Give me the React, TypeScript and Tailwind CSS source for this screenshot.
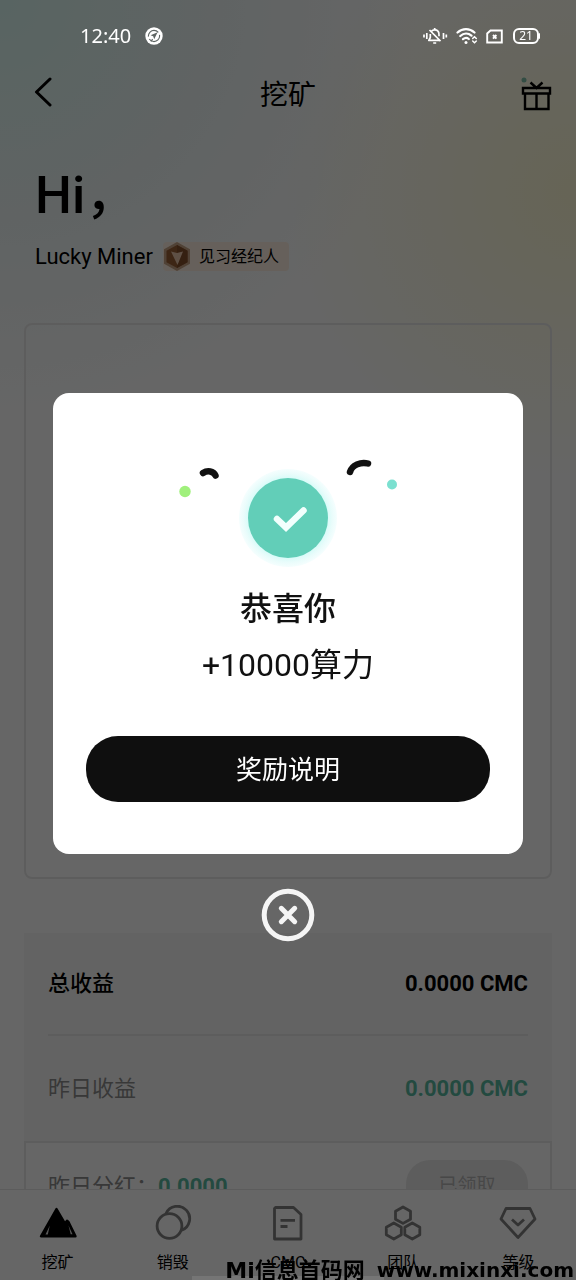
import { useState } from 'react';

const StatusBar = () => (
  <div className="relative z-30 flex h-[72px] items-center justify-between pr-9 pl-20 text-white">
    <div className="flex items-center gap-3.5">
      <span className="font-['Noto_Sans',sans-serif] text-xl">12:40</span>
      <svg width="18" height="18" viewBox="0 0 18 18" aria-hidden="true">
        <circle cx="9" cy="9" r="8.7" fill="#fff" />
        <circle cx="9" cy="9" r="5.6" fill="none" stroke="#5e6563" strokeWidth="1.1" strokeDasharray="14 2.5" />
        <path d="M12.6 5.2 5.6 8.2l2.6 1 1 3z" fill="#5e6563" />
        <path d="M6 14.5l1.6-2.3" stroke="#5e6563" strokeWidth="1.2" />
      </svg>
    </div>
    <div className="flex items-center">
      <svg width="26" height="18" viewBox="0 0 26 18" fill="none" stroke="#fff" strokeWidth="1.7" className="mr-2" aria-hidden="true">
        <path d="M2 7.5v3M4.800 6v6M21.500 6v6M24.300 7.500v3" />
        <path d="M9.500 4.200C10.300 3.200 11.400 2.800 12.700 2.800c2.800 0 4.300 1.900 4.300 4.700v1.700M8.300 7v3.500L6.800 13.400h11.400M7.500 3l11 11.200" strokeLinejoin="round" />
        <path d="M12.700 1v1.800M11.200 16h3" />
      </svg>
      <svg width="22" height="18" viewBox="0 0 22 18" fill="none" stroke="#fff" strokeWidth="2.200" strokeLinecap="round" className="mr-2" aria-hidden="true">
        <path d="M1.500 5.500C6.500 1 13.500 1 18.500 5.500M4.300 9C7.800 5.800 12.200 5.800 15.500 8.700M7 12.200c2-1.600 4-1.600 5.800-.2" />
        <circle cx="10" cy="15.500" r="1.500" fill="#fff" stroke="none" />
        <path d="M16.700 11.500l1.800-1.800 1.800 1.800M16.700 14l1.800 1.800 1.800-1.800" strokeWidth="1.500" />
      </svg>
      <svg width="17" height="15" viewBox="0 0 17 15" fill="none" stroke="#fff" strokeWidth="1.900" className="mr-2.5" aria-hidden="true">
        <path d="M4.500 1.500H15.800V13.500H1.200V4.500z" />
        <path d="M7 6l3.400 3.600M10.400 6L7 9.600" />
      </svg>
      <div className="flex items-center">
        <span className="flex h-4 w-[26px] items-center justify-center rounded-md border-2 border-white font-['Noto_Sans',sans-serif] text-xs leading-3">
          21
        </span>
        <span className="h-1.5 w-px rounded-r bg-white" />
      </div>
    </div>
  </div>
);

const MineIcon = () => (
  <svg width="38" height="36" viewBox="0 0 38 36" aria-hidden="true">
    <path d="M17.500 4 2 31.300h34.500L29.500 17l-1.500-1.200-2 2.700z" fill="#000" stroke="#000" strokeWidth="2.400" strokeLinejoin="round" />
    <path d="M10.800 20.500 6.500 29.500h2.300zM29.500 20.500l4 8.800h-1.800z" fill="#d8d8d8" />
  </svg>
);

const BurnIcon = () => (
  <svg width="38" height="36" viewBox="0 0 38 36" fill="none" stroke="currentColor" strokeWidth="2.800" aria-hidden="true">
    <circle cx="15.500" cy="21" r="12.400" />
    <path d="M12 8.500A12.400 12.400 0 1 1 27.800 25.200" />
  </svg>
);

const DocIcon = () => (
  <svg width="38" height="36" viewBox="0 0 38 36" fill="none" stroke="currentColor" strokeWidth="2.800" strokeLinejoin="round" aria-hidden="true">
    <path d="M6.500 2.500h18l7.500 7V34H5.500V3.500z" />
    <path d="M11.500 15.300H26M11.500 21.500h7" />
  </svg>
);

const TeamIcon = () => (
  <svg width="38" height="36" viewBox="0 0 38 36" fill="none" stroke="currentColor" strokeWidth="2.800" strokeLinejoin="round" aria-hidden="true">
    <path d="M19 2l7.500 4.200v8L19 18.400l-7.500-4.200v-8z" />
    <path d="M9.800 18l7.500 4.200v7.600L9.800 34l-7.500-4.200v-7.600zM28.300 18l7.500 4.200v7.600L28.300 34l-7.500-4.200v-7.600z" />
  </svg>
);

const LevelIcon = () => (
  <svg width="38" height="36" viewBox="0 0 38 36" fill="none" stroke="currentColor" strokeWidth="2.800" strokeLinejoin="round" aria-hidden="true">
    <path d="M7 3.500h24L36 14 19 32.500 2 14z" />
    <path d="M13 14.500l6 5.500 6-5.500" />
  </svg>
);

const tabs = [
  { label: '挖矿', Icon: MineIcon },
  { label: '销毁', Icon: BurnIcon },
  { label: 'CMC', Icon: DocIcon },
  { label: '团队', Icon: TeamIcon },
  { label: '等级', Icon: LevelIcon },
];

const RewardArt = () => (
  <svg width="230" height="116" viewBox="0 0 230 116" fill="none" className="mx-auto" aria-hidden="true">
    <defs>
      <radialGradient id="halo">
        <stop offset="0.8" stopColor="#d6fbf8" />
        <stop offset="0.9" stopColor="#e9fcfb" />
        <stop offset="1" stopColor="#f5fefe" />
      </radialGradient>
    </defs>
    <circle cx="115" cy="65" r="49" fill="url(#halo)" />
    <circle cx="115" cy="65" r="40" fill="#62ceb8" />
    <path d="M104 66l9 8.500L130.500 57.500" stroke="#f2fffd" strokeWidth="6.500" strokeLinecap="round" />
    <path d="M30 20c4.500-3 10.500-2 12.500 2.500" stroke="#111" strokeWidth="6.500" strokeLinecap="round" />
    <path d="M177 19c2-7 11-10.500 18-8.500" stroke="#111" strokeWidth="6.500" strokeLinecap="round" />
    <circle cx="12" cy="38.500" r="5.700" fill="#a0f07c" />
    <circle cx="219" cy="31.500" r="5" fill="#7be0d0" />
  </svg>
);

const RewardDialog = ({ onClose }: { onClose: () => void }) => (
  <div className="fixed inset-0 z-20 flex flex-col items-center justify-center bg-black/60 px-[53px] pt-[54px]">
    <div role="dialog" aria-labelledby="reward-title" className="w-full rounded-2xl bg-white px-[33px] pt-[60px] pb-[52px] text-center text-[#111]">
      <RewardArt />
      <h2 id="reward-title" className="mt-[18px] text-[32px] leading-[44px] font-medium">恭喜你</h2>
      <p className="mt-3 text-[32px] leading-[44px]">+10000算力</p>
      <button type="button" className="mt-[49px] h-[66px] w-full rounded-[32px] bg-[#0f0f0f] pt-1 text-[26px] text-white">
        奖励说明
      </button>
    </div>
    <button type="button" aria-label="关闭" onClick={onClose} className="mt-[34px]">
      <svg width="54" height="54" viewBox="0 0 54 54" fill="none" stroke="#f5f5f5" strokeWidth="5" strokeLinecap="round" aria-hidden="true">
        <circle cx="27" cy="27" r="23.800" />
        <path d="M20.300 20.300l13.400 13.400M33.700 20.300L20.300 33.700" />
      </svg>
    </button>
  </div>
);

const App = () => {
  const [open, setOpen] = useState(true);

  return (
    <div className="flex h-screen flex-col bg-white bg-[radial-gradient(circle_at_100%_15%,#fffbd6_0,#fffbd600_290px),radial-gradient(circle_at_0_0,#dcfaf5_0,#f0f8f8_220px,#ffffff00_420px)] font-[Roboto,'Noto_Sans_CJK_SC',sans-serif] text-black">
      <StatusBar />
      <header className="flex h-11 shrink-0 items-center justify-between px-6">
        <button type="button" aria-label="返回" className="flex w-10 pb-1 pl-2">
          <svg width="22" height="30" viewBox="0 0 22 30" fill="none" stroke="currentColor" strokeWidth="3" strokeLinecap="round" strokeLinejoin="round" aria-hidden="true">
            <path d="M18 2L4.500 15 18 28" />
          </svg>
        </button>
        <h1 className="pt-1 text-[28px]">挖矿</h1>
        <button type="button" aria-label="礼物" className="flex w-10 justify-end">
          <svg width="32" height="36" viewBox="0 0 32 36" fill="none" stroke="currentColor" strokeWidth="2.400" aria-hidden="true">
            <circle cx="4" cy="4" r="2.500" fill="#7fc0aa" stroke="none" />
            <path d="M3 12h27v5.500H3zM5 17.500h23.500V33H5zM16.500 17.500V33M10.500 6.500l6 5.500 6-5.500" />
          </svg>
        </button>
      </header>

      <main className="flex-1 overflow-hidden px-6">
        <section className="px-[11px] pt-11">
          <p className="text-[52px] leading-[72px] font-medium">Hi，</p>
          <div className="mt-2 flex h-8 items-center">
            <span className="text-[22px]">Lucky Miner</span>
            <div className="ml-2.5 flex h-[29px] items-center gap-2 rounded bg-[#fff1e3] pr-2.5">
              <svg width="28" height="29" viewBox="0 0 28 29" aria-hidden="true">
                <path d="M14 0l13 7.200v14.600L14 29 1 21.800V7.200z" fill="#c9a587" />
                <path d="M14 3l10.500 5.800v11.400L14 26 3.500 20.200V8.800z" fill="#9a5f35" />
                <path d="M14 3l10.500 5.800v11.400L14 26z" fill="#84502c" />
                <path d="M8 9.500l6 1.500 6-1.500L14.500 23z" fill="#ecc9ad" />
              </svg>
              <span className="pt-0.5 text-base">见习经纪人</span>
            </div>
          </div>
        </section>

        <section className="mt-[51px] h-[556px] rounded-lg border-2 border-[#e9e9e9]" />

        <section className="mt-[54px]">
          <dl className="bg-[#f8f8f8] px-6 text-[22px]">
            <div className="flex h-[103px] items-center justify-between border-b-2 border-[#e9e9e9]">
              <dt className="font-medium">总收益</dt>
              <dd className="font-bold">0.0000 CMC</dd>
            </div>
            <div className="flex h-[105px] items-center justify-between">
              <dt className="text-[#8c8c8c]">昨日收益</dt>
              <dd className="font-bold text-[#58b8a0]">0.0000 CMC</dd>
            </div>
          </dl>
          <div className="flex h-[90px] items-center justify-between border-2 border-[#e9e9e9] px-[22px] text-[22px]">
            <p className="flex text-[#8c8c8c]">
              昨日分红：
              <span className="font-bold text-[#58b8a0]">0.0000</span>
            </p>
            <button type="button" disabled className="h-[52px] w-[122px] rounded-3xl bg-[#e9e9e9] text-[19px] text-[#b4b4b4]">
              已领取
            </button>
          </div>
        </section>
      </main>

      <nav className="grid h-[91px] shrink-0 grid-cols-5 border-t border-[#e6e6e6] bg-white">
        {tabs.map(({ label, Icon }) => (
          <button key={label} type="button" className="flex flex-col items-center gap-2.5 pt-[15px] text-[#808080]">
            <Icon />
            <span className="text-base text-black">{label}</span>
          </button>
        ))}
      </nav>

      {open && <RewardDialog onClose={() => setOpen(false)} />}

      <div className="fixed inset-x-0 bottom-0 z-30 mx-auto h-1 w-1/3 bg-[#757575]" />
      <p className="fixed right-0.5 bottom-0 z-40 flex h-5 items-center gap-3 font-['DejaVu_Sans','Noto_Sans_CJK_SC',sans-serif] font-bold whitespace-nowrap text-black">
        <span className="text-[22px]">Mi信息首码网</span>
        <span className="text-xl">www.mixinxi.com</span>
      </p>
    </div>
  );
};

export default App;
